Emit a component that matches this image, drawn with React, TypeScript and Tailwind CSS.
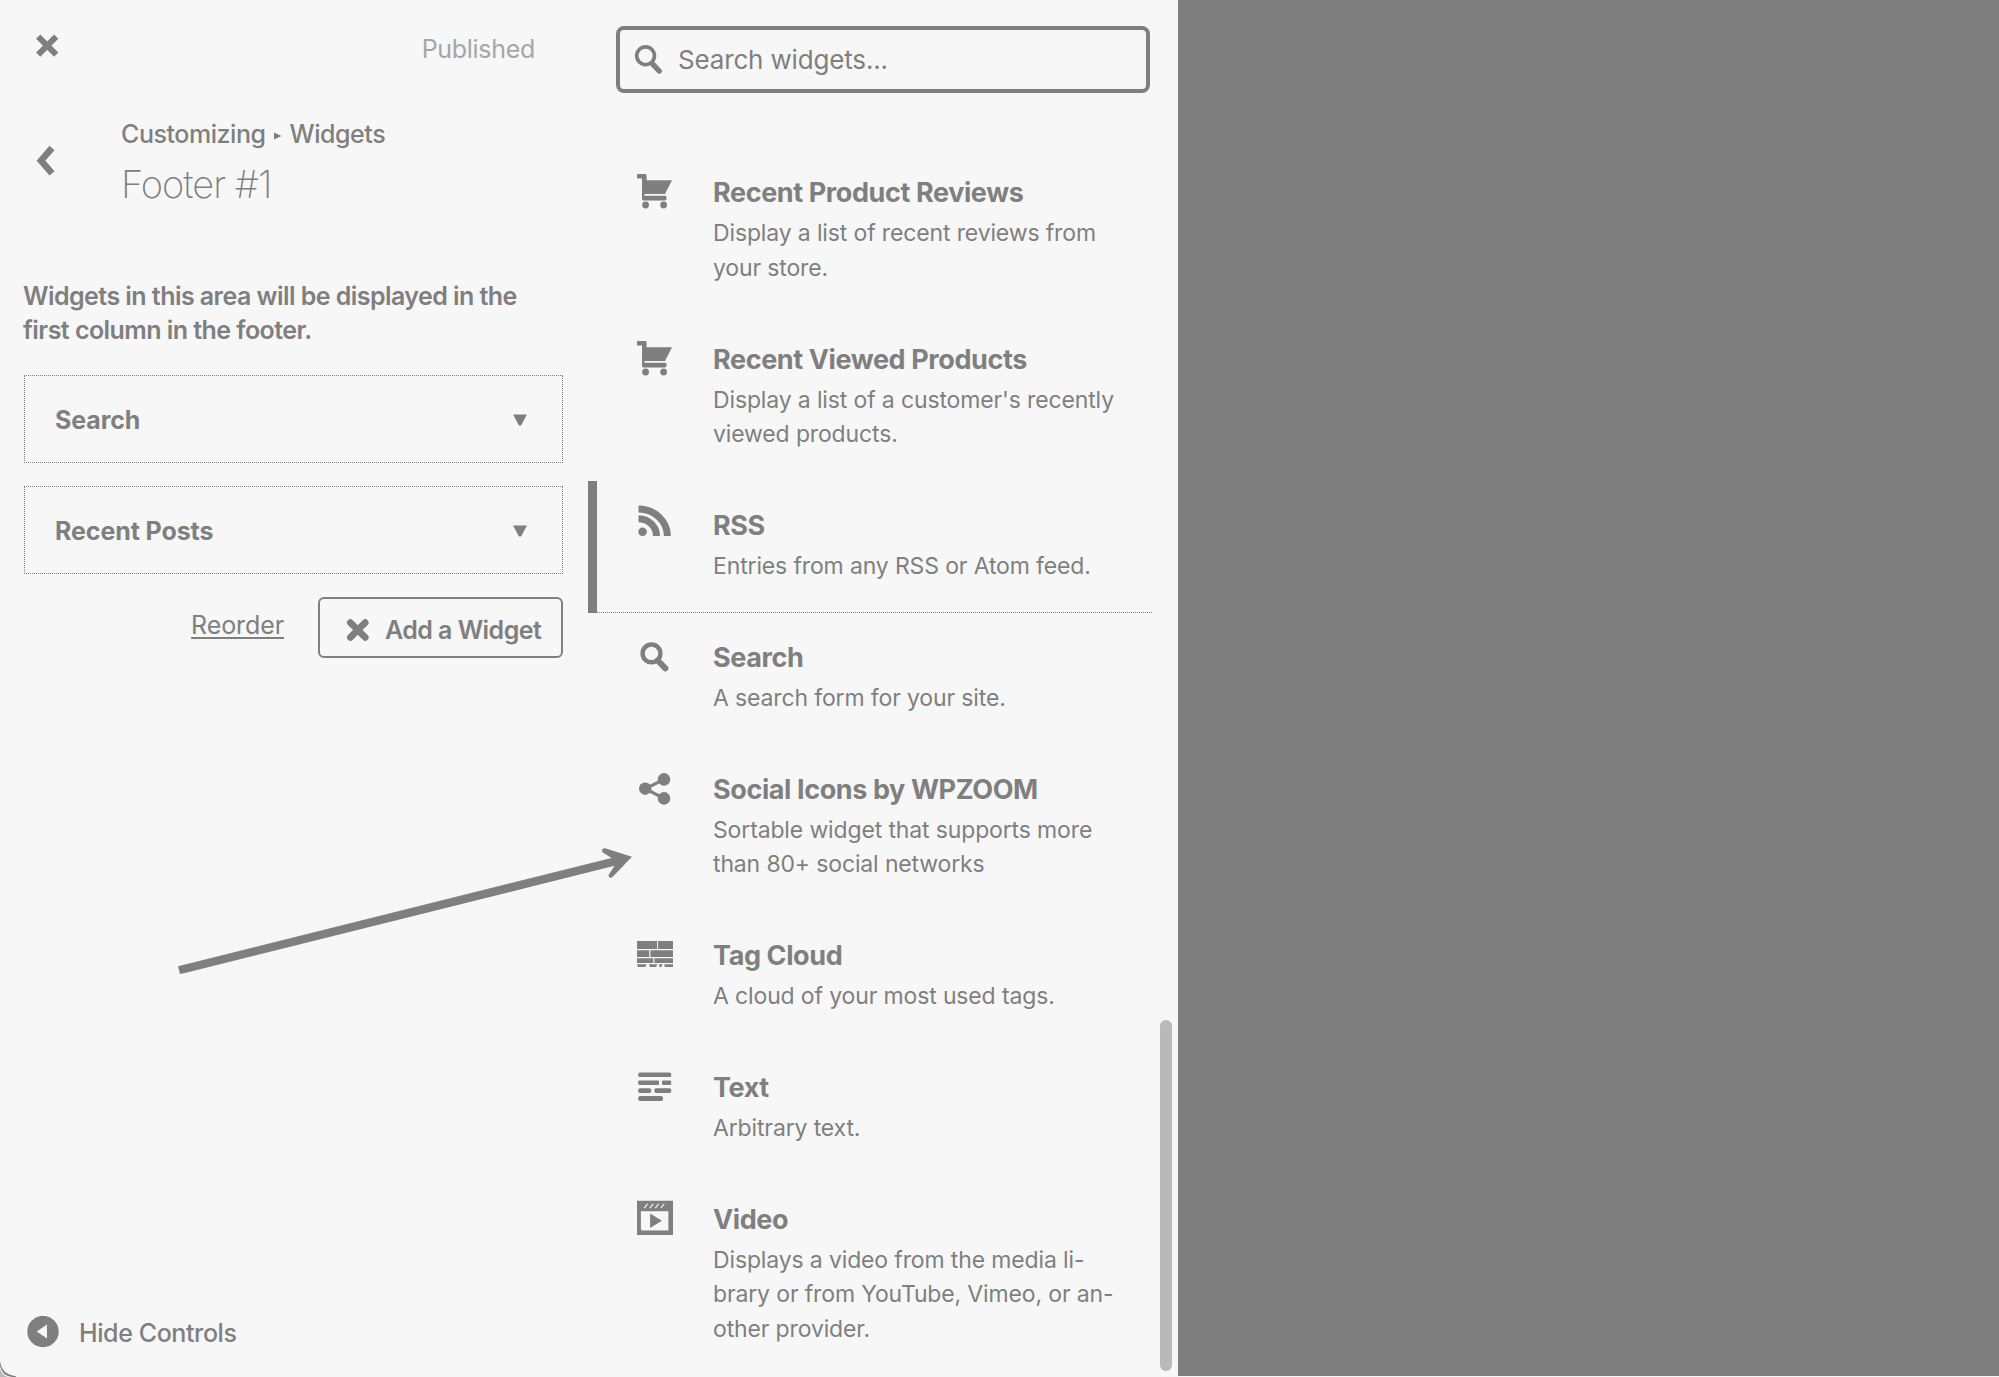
import type { ReactNode } from 'react';

function CartIcon() {
  return (
    <svg viewBox="0 0 40 40" className="size-10" fill="currentColor">
      <path d="M2.6 3H10.2Q11.6 3 11.6 4.4V9.2H37L30 23H9.4V24.8H30.2Q31.6 24.8 31.6 27.1T30.2 29.4H8.4Q7 29.4 7 28V7.6H2.6Q2 7.6 2 6.4V4.4Q2 3 2.6 3Z" />
      <circle cx="10.6" cy="34" r="3.4" />
      <circle cx="28.6" cy="34" r="3.4" />
    </svg>
  );
}

function RssIcon() {
  return (
    <svg viewBox="0 0 40 40" className="size-10" fill="none" stroke="currentColor" strokeWidth="7">
      <circle cx="7.6" cy="27.8" r="4.3" fill="currentColor" stroke="none" />
      <path d="M3.5 5A29 27 0 0 1 32.4 32M3.5 14.7A18 17.3 0 0 1 21.5 32" />
    </svg>
  );
}

function SearchIcon() {
  return (
    <svg viewBox="0 0 40 40" className="size-10" fill="none" stroke="currentColor">
      <circle cx="16.5" cy="17.4" r="8.9" strokeWidth="4.4" />
      <path d="M22.6 24.4L30.4 32.4" strokeWidth="6" strokeLinecap="round" />
    </svg>
  );
}

function ShareIcon() {
  return (
    <svg viewBox="0 0 40 40" className="size-10" fill="currentColor">
      <circle cx="10.2" cy="20.7" r="6.2" />
      <circle cx="29" cy="11.4" r="6.3" />
      <circle cx="29" cy="30.4" r="6.3" />
      <path d="M29 11.4L10.2 20.7L29 30.4" fill="none" stroke="currentColor" strokeWidth="3.2" />
    </svg>
  );
}

function TagCloudIcon() {
  return (
    <svg viewBox="0 0 40 40" className="size-10" fill="currentColor">
      <path d="M2 7H22.1V15H2ZM23.1 7H38V15H23.1ZM2 16.2H14.2V23H2ZM15.4 16.2H38V23H15.4ZM2 24.2H18.2V29H2ZM19.4 24.2H38V29H19.4ZM2 30.2H11.6L10.2 33H3ZM14 30.2H22.3L21 33H15ZM23.6 30.2H27.6L26.6 33H24.6ZM29 30.2H38V33H30Z" />
    </svg>
  );
}

function TextIcon() {
  return (
    <svg viewBox="0 0 40 40" className="size-10" fill="currentColor">
      <rect x="3.2" y="6.4" width="33" height="4.6" rx="1.6" />
      <rect x="3.2" y="14.4" width="20.8" height="4.6" rx="1.2" />
      <rect x="27" y="14.4" width="9.2" height="4.6" rx="1.2" />
      <rect x="3.2" y="22.2" width="13" height="4.7" rx="1.6" />
      <rect x="19.4" y="22.2" width="16.8" height="4.7" rx="1.6" />
      <rect x="3.2" y="30.1" width="24.8" height="4.9" rx="2" />
    </svg>
  );
}

function VideoIcon() {
  return (
    <svg viewBox="0 0 40 40" className="size-10" fill="currentColor">
      <path fillRule="evenodd" d="M2 2.7H38V37H2ZM5.9 13.2V31.2L7 32.4H33.4V13.2Z" />
      <path d="M15.1 15.6L27 22.8L15.1 30.1Z" />
      <path d="M9.2 10.2L12.6 5.8M14.8 10.2L18.2 5.8M20.3 10.2L23.7 5.8M25.8 10.2L29.2 5.8" stroke="#f7f7f7" strokeWidth="1.1" />
    </svg>
  );
}

type Widget = { title: string; lines: string[]; icon: ReactNode; active?: boolean };

const widgets: Widget[] = [
  { title: 'Recent Product Reviews', lines: ['Display a list of recent reviews from', 'your store.'], icon: <CartIcon /> },
  { title: 'Recent Viewed Products', lines: ["Display a list of a customer's recently", 'viewed products.'], icon: <CartIcon /> },
  { title: 'RSS', lines: ['Entries from any RSS or Atom feed.'], icon: <RssIcon />, active: true },
  { title: 'Search', lines: ['A search form for your site.'], icon: <SearchIcon /> },
  { title: 'Social Icons by WPZOOM', lines: ['Sortable widget that supports more', 'than 80+ social networks'], icon: <ShareIcon /> },
  { title: 'Tag Cloud', lines: ['A cloud of your most used tags.'], icon: <TagCloudIcon /> },
  { title: 'Text', lines: ['Arbitrary text.'], icon: <TextIcon /> },
  { title: 'Video', lines: ['Displays a video from the media li-', 'brary or from YouTube, Vimeo, or an-', 'other provider.'], icon: <VideoIcon /> },
];

function WidgetItem({ title, lines, icon, active }: Widget) {
  return (
    <li className="flex w-[564px]">
      <div className={active ? 'w-[9px] bg-[#7f7f80]' : 'w-[9px]'} />
      <div
        className={
          active
            ? 'flex flex-1 border-b border-dotted border-[#7f7f80] pt-[30px] pb-[28.5px] pl-[38px]'
            : 'flex flex-1 pt-[30px] pb-[29.5px] pl-[38px]'
        }
      >
        <div className="-mt-[7px] mr-[38px] h-10 w-10">{icon}</div>
        <div className="whitespace-nowrap">
          <h3 className="text-[27px] leading-[30px] font-bold tracking-[-0.4px]">{title}</h3>
          <div className="mt-2 text-[23px] leading-[34.4px] tracking-[-0.14px]">
            {lines.map((line) => (
              <p key={line}>{line}</p>
            ))}
          </div>
        </div>
      </div>
    </li>
  );
}

function PlacedWidget({ title }: { title: string }) {
  return (
    <div className="flex h-[88px] items-center justify-between border border-dotted border-[#7f7f80] pr-[35px] pl-[30px]">
      <span className="mt-0.5 text-[25px] leading-[30px] font-bold tracking-[-0.1px]">{title}</span>
      <svg viewBox="0 0 14 12" className="mt-0.5 h-3 w-3.5" fill="currentColor">
        <path d="M0 0.6H14L8 11.4H6Z" />
      </svg>
    </div>
  );
}

function Controls() {
  return (
    <aside className="flex w-[588px] flex-col">
      <div className="flex h-[119px] justify-between pt-[34px] pr-[53px] pl-9">
        <svg viewBox="0 0 24 24" className="size-6" fill="none" stroke="currentColor" strokeWidth="6">
          <path d="M2.2 2.6L20.2 20.6M20.2 2.6L2.2 20.6" />
        </svg>
        <span className="text-[25px] leading-[30px] tracking-[-0.3px] text-[#a6a6a6]">Published</span>
      </div>

      <div className="flex h-[159.5px] pl-9">
        <svg viewBox="0 0 20 32" className="mt-[26px] mr-[65px] h-8 w-5" fill="none" stroke="currentColor" strokeWidth="6.6">
          <path d="M16 3L5 15.7L16 28.4" />
        </svg>
        <div>
          <div className="flex items-center text-[25px] leading-[30px] font-medium tracking-[-0.45px]">
            Customizing
            <svg viewBox="0 0 8 8" className="mx-2 mt-1 size-2" fill="currentColor">
              <path d="M0 0.5L7.5 4L0 7.5Z" />
            </svg>
            Widgets
          </div>
          <h1 className="mt-[13px] text-[38px] leading-[44px] font-extralight tracking-[-1px]">Footer #1</h1>
        </div>
      </div>

      <div className="flex flex-1 flex-col pr-[25px] pl-[23px]">
        <p className="text-[25px] leading-[34.2px] font-semibold tracking-[-0.55px]">
          Widgets in this area will be displayed in the
          <br />
          first column in the footer.
        </p>
        <div className="mt-7 ml-px flex flex-col gap-[23px]">
          <PlacedWidget title="Search" />
          <PlacedWidget title="Recent Posts" />
        </div>
        <div className="mt-[23px] flex justify-end">
          <a className="mt-[13px] mr-[34px] text-[25px] leading-[30px] tracking-[-0.1px] underline decoration-2 underline-offset-[3px]">Reorder</a>
          <button className="flex h-[61px] w-[245px] items-center rounded-md border-2 border-[#7f7f80] pl-[26px] text-[25px] leading-[30px] font-semibold tracking-[-0.55px] whitespace-nowrap">
            <svg viewBox="0 0 24 24" className="mt-[5px] mr-[15px] size-6" fill="none" stroke="currentColor" strokeWidth="6.8" strokeLinecap="round">
              <path d="M4.4 4.6L19.2 19.4M19.2 4.6L4.4 19.4" />
            </svg>
            <span className="mt-[5px]">Add a Widget</span>
          </button>
        </div>
      </div>

      <div className="mb-[29px] flex h-8 items-center pl-[27px]">
        <svg viewBox="0 0 32 32" className="mr-5 size-8" fill="currentColor">
          <circle cx="16" cy="15.5" r="15.7" />
          <path d="M20 8.4V22.6L9.7 15.5Z" fill="#f7f7f7" />
        </svg>
        <span className="mt-px text-[25px] leading-[30px] font-medium tracking-[-0.4px]">Hide Controls</span>
      </div>
    </aside>
  );
}

function AvailableWidgets() {
  return (
    <section className="flex w-[590px]">
      <div className="w-[564px]">
        <div className="pt-[26px] pl-7">
          <div className="flex h-[67px] w-[534px] items-center rounded-lg border-4 border-[#7f7f80] pl-[14px]">
            <svg viewBox="0 0 30 30" className="mr-[14px] size-[30px]" fill="none" stroke="currentColor">
              <circle cx="11.6" cy="10.8" r="8.9" strokeWidth="3.6" />
              <path d="M18 18.4L25.2 26" strokeWidth="5.4" strokeLinecap="round" />
            </svg>
            <span className="text-[26px] leading-[30px] tracking-[-0.16px]">Search widgets...</span>
          </div>
        </div>
        <ul className="mt-[55.3px]">
          {widgets.map((w) => (
            <WidgetItem key={w.title} {...w} />
          ))}
        </ul>
      </div>
      <div className="mt-[1020px] ml-2 h-[351px] w-3 rounded-full bg-[#b9b9b9]" />
    </section>
  );
}

export default function App() {
  return (
    <div className="relative flex h-[1377px] w-[1999px] overflow-hidden bg-[#f7f7f7] font-[Inter,'Liberation_Sans',sans-serif] text-[#7f7f80]">
      <Controls />
      <AvailableWidgets />
      <main className="h-[1376px] flex-1 bg-[#7f7f80]" />

      <svg viewBox="0 0 460 130" className="absolute top-[847px] left-[176px] h-[130px] w-[460px]" fill="currentColor">
        <path d="M2 119.2L435.5 11L426.5 5.2Q424.8 1.4 429 1.2L456 9.8L437 29.6Q433 32.8 432.4 28.2L438.6 18.8L9 126L4 127Z" />
      </svg>
      <svg viewBox="0 0 16 16" className="absolute bottom-0 left-0 size-4" fill="currentColor">
        <path d="M0 0Q1.5 13.5 16 15.2V16H12Q2 14.5 0 5Z" />
        <path d="M0 8Q2.5 14.5 8 16H0Z" opacity="0.5" />
      </svg>
    </div>
  );
}
